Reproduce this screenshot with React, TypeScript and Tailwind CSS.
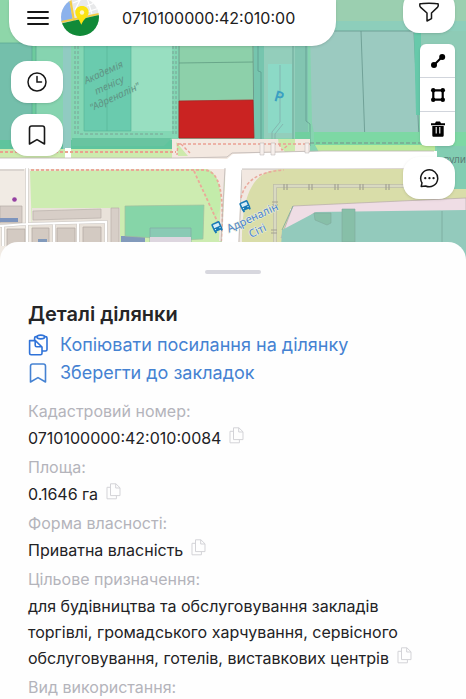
import { useState } from "react";
import type { ReactNode } from "react";

const PARCEL_PURPOSE =
  "для будівництва та обслуговування закладів торгівлі, громадського харчування, сервісного обслуговування, готелів, виставкових центрів";

function BookmarkIcon({ className }: { className: string }) {
  return (
    <svg viewBox="0 0 18 20" className={className} fill="none" stroke="currentColor" strokeWidth="1.6" strokeLinejoin="round" aria-hidden="true">
      <path d="M1.5 19V3.2C1.5 1.7 2.3 1 3.7 1h10.6c1.4 0 2.2.7 2.2 2.2V19L9 14.6z" />
    </svg>
  );
}

function CopyIcon() {
  return (
    <svg viewBox="0 0 15 17" className="h-[17px] w-[15px]" fill="none" stroke="currentColor" strokeWidth="1" strokeLinejoin="round" aria-hidden="true">
      <path d="M4.5.8h5.4l4.1 4v7.8H4.5z" />
      <path d="M9.7.8v4.2H14M4.5 4.3H1v11.5h9.4v-3" />
    </svg>
  );
}

function CopyLinkIcon() {
  return (
    <svg viewBox="0 0 20 22" className="h-[22px] w-5 text-[#2f72d8]" fill="none" stroke="currentColor" strokeWidth="1.6" strokeLinejoin="round" aria-hidden="true">
      <rect x="6.6" y="2.6" width="12.4" height="14.4" rx="1.5" />
      <path d="M1.6 6.6h5.8L14 13v6.2c0 1-.5 1.6-1.5 1.6H3.1c-1 0-1.5-.6-1.5-1.6z" fill="#fefefe" />
      <path d="M7.2 6.8v4.4c0 1.1.5 1.6 1.6 1.6h5" />
      <ellipse cx="12.8" cy="3" rx="3.8" ry="1.9" fill="#fefefe" />
    </svg>
  );
}

function Logo() {
  return (
    <svg viewBox="0 0 38 38" className="size-[38px] shrink-0" aria-hidden="true">
      <defs>
        <clipPath id="logo-clip">
          <circle cx="19" cy="19" r="19" />
        </clipPath>
      </defs>
      <g clipPath="url(#logo-clip)">
        <rect width="38" height="38" fill="#e8e9ea" />
        <path d="M12 5 24 0M26 8l12-5M26 14l12-4M14 12l6-12M31 16 26 0" stroke="#fff" strokeWidth="1.2" />
        <path d="M0 0h8l4 22-12 3z" fill="#8cb2ec" />
        <path d="m9 0 4 23M0 24l38-8" stroke="#f4cd45" strokeWidth="2.2" fill="none" />
        <path d="M0 25.4 38 17v21H0z" fill="#118a38" />
        <path d="M21 8c-4 0-6.7 2.6-6.7 6.2 0 4.6 3.7 6.3 6 12.600 2.300-6.300 7.400-8 7.400-12.600C27.700 10.600 25 8 21 8z" fill="#fce312" />
        <circle cx="21" cy="14.5" r="2.2" fill="#fff6c9" />
      </g>
    </svg>
  );
}

function BusStop({ x, y }: { x: number; y: number }) {
  return (
    <g transform={`translate(${x} ${y}) rotate(-24)`}>
      <rect x="-4.5" y="-5" width="9" height="9" rx="1.5" fill="#1779b5" />
      <rect x="-3" y="-3.4" width="6" height="3.4" fill="#d8edf7" />
      <path d="M-3.2 3v2.2M3.2 3v2.2" stroke="#1779b5" strokeWidth="1.8" />
      <path d="M-3 1.8h1.2M1.8 1.8H3" stroke="#fff" strokeWidth="1" />
    </g>
  );
}

function CadastreMap() {
  return (
    <svg
      viewBox="0 0 466 264"
      preserveAspectRatio="xMidYMin slice"
      className="absolute inset-x-0 top-0 h-[264px] w-full"
      role="img"
      aria-label="Кадастрова карта"
    >
      <rect width="466" height="264" fill="#f1ebe4" />

      {/* parcels north of the street */}
      <path d="M0 0h466v152H0z" fill="#86d4b0" />
      <path d="M0 0h33v43H0z" fill="#8ed6a9" />
      <path d="M0 43h32v98H0z" fill="#74bfab" />
      <path d="M32 43h4v98h-4z" fill="#6dcb9d" />
      <path d="M0 43h32v98M36 46v95" stroke="#5aa693" strokeWidth=".7" fill="none" />
      <path d="M0 140h172v10H0z" fill="#5fc49d" />
      <path d="M72 138h100l-8 8H72z" fill="#68c4a0" />
      <path d="M73 46h106v92H73z" fill="#83d7b4" />
      <path d="M84 46h47v85H84z" fill="#6acbae" />
      <path d="M131 46h41v85h-41z" fill="#98dfc1" />
      <path d="M84 46v85h47V46M107 46v85" stroke="#55b196" strokeWidth=".6" fill="none" />
      <path d="M78 46v88h87M75 46v88M173 46v88M176 46v88" stroke="#7a9c92" strokeWidth=".9" strokeDasharray="3 2" fill="none" />
      <path d="M63 46h8v104h-8z" fill="#91cbc2" />

      <path d="M179 46h74v55h-74z" fill="#8dd0aa" />
      <path d="m179 63 74-1" stroke="#5f9c82" strokeWidth=".8" />
      <path d="M179 46v92M253 46l1 92" stroke="#648f83" strokeWidth=".8" />
      <path d="M254 46h10v97h-10z" fill="#76c5ae" />
      <path d="M264 46h31v92h-31z" fill="#93cebb" />
      <path d="M268 64h24v69h-24z" fill="#8cd9c6" />
      <path d="M295 46h13v97h-13z" fill="#82c5b1" />
      <path d="M258 46v25l3 1v80M306 46v75l4 3v22M293 46v97" stroke="#5d978b" strokeWidth=".7" fill="none" />
      <path d="M280 65v57l-8 10v20M275 152v-18l8-10" stroke="#80a8a6" strokeWidth=".7" fill="none" />

      <path d="M300 0h166v31H300z" fill="#9bcfb0" />
      <path d="M300 21h166v10H300z" fill="#8dcebb" />
      <path d="M310 31h106l3 102H314l-2-10z" fill="#9bcac0" />
      <path d="M308 31h107M361 31l4 112M414 33l5 104" stroke="#66978d" strokeWidth=".8" fill="none" />
      <path d="M414 33h7v82h-5z" fill="#67c9aa" />
      <path d="M421 31h45v106h-45z" fill="#8ecbb6" />
      <path d="M314 132h152v14H314z" fill="#7dd8a4" />
      <path d="M310 143h110" stroke="#7b8f89" strokeWidth="1" strokeDasharray="4 2" />
      <path d="M295 132h15v12h-15z" fill="#70cf9f" />

      {/* verge and pavements */}
      <path d="M0 149h178v12H0z" fill="#cdebad" />
      <path d="M65 148h6v13h-6z" fill="#fff" />
      <path d="M172 139h138v21H172z" fill="#f3e8e0" />
      <path d="m176 142 12 14h-10zM278 139h17v12l-10 1-6-7z" fill="#cdeaac" />
      <path d="M315 145h120v9H320z" fill="#bcea9b" />
      <path d="M0 152h176" stroke="#e9a28f" strokeWidth="1.8" strokeDasharray="3 2" />
      <path d="M178 144h132M178 143l-1 12M181 144l9 9M279 144l3 6 5-4" stroke="#eba093" strokeWidth="1.4" strokeDasharray="3 2" fill="none" />
      <path d="M179 101 253 100 254 138H179z" fill="#ca2322" stroke="#a82525" strokeWidth=".8" />

      {/* main street */}
      <path d="M0 158h178l49 1 6-5 90-3h143v16l-130 2H0z" fill="#fff" />
      <path d="M0 158h178l49-1 5-4 90-2h112M0 170h24M242 169h195" stroke="#bcb5b3" strokeWidth=".8" fill="none" />
      <path d="M260 143h4v12h-4zM271 143h4v12h-4zM305 143h4v10h-4z" fill="#f6efec" stroke="#b5b2b0" strokeWidth=".5" />
      <path d="M437 146h29v48h-29z" fill="#82cdb2" />

      {/* south-west quarter */}
      <path d="m30 171 165-2h22l8 10-4 85H33z" fill="#cdecb1" />
      <path d="m195 169 12 1c9 2 15 15 15 35l-7 14z" fill="#c3ecaa" />
      <path d="M207 169h18l-3 72h-3l2-45c-2-15-5-24-14-27z" fill="#f2e7e1" />
      <path d="M31 170h173c16 1 20 22 18 71M194 171l24 52" stroke="#eaa998" strokeWidth="1.8" strokeDasharray="3 2" fill="none" />
      <path d="M32 208h88v56H32z" fill="#e9e2da" />
      <path d="m33 211 68-2v9l-68 2zM111 208h8v35h-8z" fill="#d7cec7" stroke="#b9b0aa" strokeWidth=".7" />
      <path d="M0 206h22v17H0z" fill="#d6ccc6" stroke="#b5aca8" strokeWidth=".7" />
      <path d="M0 218h18v4H0z" fill="#7d94bd" />
      <path d="M7 229h18v18H7zM32 228h17v18H32zM57 228h18v18H57zM83 227h18v18H83z" fill="#d3cac2" stroke="#b5aba5" strokeWidth=".8" />
      <path d="M38 239h9v4h-9zM121 236h24v6h-24z" fill="#829abb" />
      <path d="M27 168v78M0 226l26-2 80-2v22M3 226v20M54 224v22M78 223v22" stroke="#c9c5c2" strokeWidth="3.2" fill="none" />
      <path d="M27 168v78M0 226l26-2 80-2v22M3 226v20M54 224v22M78 223v22" stroke="#fff" strokeWidth="2.2" fill="none" />
      <path d="m125 206 79-1-1 34-20 1-58-4z" fill="#86d5a8" stroke="#a4bf9d" strokeWidth=".7" />
      <path d="M150 228h41v14h-41z" fill="#8acab4" stroke="#83aaa6" strokeWidth=".7" />
      <path d="M150 237h41v8h-41z" fill="#ddd6df" />
      <circle cx="14.5" cy="199.5" r="2.3" fill="#9540a2" />

      {/* side street */}
      <path d="M226 165h16l-4 79h-16z" fill="#fff" />
      <path d="m225 168-4 74M242 170l-3 72" stroke="#bdb6b3" strokeWidth=".8" />

      {/* south-east quarter */}
      <path d="M242 170h38c-20 2-34 14-37 50z" fill="#f2e8e1" />
      <path d="M242 242c0-47 10-73 42-73h182v40H290v55h-48z" fill="#d9dda9" />
      <path d="M241 198c4-17 16-26 43-28" stroke="#eaa99d" strokeWidth="1.6" strokeDasharray="3 2" fill="none" />
      <path d="m293 206 173-8v14l-152 1-33 25z" fill="#efdde5" stroke="#b6aba9" strokeWidth=".7" />
      <path d="m282 230 34-18 150-2v54H280z" fill="#93cabc" />
      <path d="M314 213h17v10l-4 2-12-5zM342 209h13v33h-13z" fill="#87bfa8" stroke="#7fa99c" strokeWidth=".6" />
      <path d="M442 211v34M282 230l11-24" stroke="#78a89c" strokeWidth=".8" />
      <path d="M275 264v-78h191" stroke="#bdbda6" strokeWidth="4" fill="none" />
      <path d="M275 264v-78h191" stroke="#d9d9c1" strokeWidth="2.5" fill="none" />
      <path d="M284 184v6M287 184v6M309 184v6M312 184v6M335 184v6M338 184v6M360 184v6M363 184v6M386 184v6M389 184v6M272 202h6M272 205h6M271 230h6M271 233h6" stroke="#a3a292" strokeWidth="1.2" />
      <path d="M437 169h29v20h-29z" fill="#82cdb2" />

      <BusStop x={217} y={227} />
      <BusStop x={245} y={206} />
      <g className="font-['Noto_Sans',sans-serif]" textAnchor="middle">
        <g fill="#5f9384" fontSize="10" fontStyle="italic" transform="translate(107 80) rotate(-25)">
          <text x="0" y="-5">Академія</text>
          <text x="0" y="9">тенісу</text>
          <text x="0" y="22">"Адреналін"</text>
        </g>
        <g fill="#4c82cb" stroke="#eaf0dc" strokeWidth="1.2" paintOrder="stroke" fontSize="11" transform="translate(254 221) rotate(-25)">
          <text x="0" y="0">Адреналін</text>
          <text x="-1" y="14">Сіті</text>
        </g>
        <text x="279" y="102" fill="#3a9fc2" fontSize="15" fontWeight="600" transform="rotate(16 279 97)">P</text>
        <text x="466" y="163" fill="#5c7e77" fontSize="10" textAnchor="end">вули</text>
      </g>
    </svg>
  );
}

function MapButton({ label, children }: { label: string; children: ReactNode }) {
  return (
    <button
      type="button"
      aria-label={label}
      className="flex h-[42px] w-[52px] items-center justify-center rounded-2xl bg-white text-[#171717] shadow-sm"
    >
      {children}
    </button>
  );
}

function DrawTools() {
  return (
    <div className="flex w-[35px] flex-col divide-y divide-gray-300 overflow-hidden rounded-md bg-white text-black shadow-sm">
      <button type="button" aria-label="Лінія" className="flex h-[34px] items-center justify-center">
        <svg viewBox="0 0 16 16" className="size-4" fill="currentColor" aria-hidden="true">
          <path d="m4 12 8-8" stroke="currentColor" strokeWidth="2" />
          <circle cx="4" cy="12" r="3" />
          <circle cx="12.2" cy="3.9" r="3" />
        </svg>
      </button>
      <button type="button" aria-label="Полігон" className="flex h-[34px] items-center justify-center">
        <svg viewBox="0 0 16 16" className="size-4" fill="currentColor" aria-hidden="true">
          <path d="M3.3 3.3h9.4v9.4H3.3z" fill="none" stroke="currentColor" strokeWidth="2.2" />
          <circle cx="3.2" cy="3.2" r="2.2" />
          <circle cx="12.8" cy="3.2" r="2.2" />
          <circle cx="3.2" cy="12.8" r="2.2" />
          <circle cx="12.8" cy="12.8" r="2.2" />
        </svg>
      </button>
      <button type="button" aria-label="Видалити" className="flex h-[34px] items-center justify-center">
        <svg viewBox="0 0 16 18" className="h-[18px] w-4" fill="currentColor" aria-hidden="true">
          <path d="M1 3.2h4L6 1.5h4l1 1.7h4v2H1z" />
          <path d="M2.3 6h11.4v9.2c0 1-.6 1.6-1.6 1.6H3.9c-1 0-1.6-.6-1.6-1.6z" />
          <path d="M6.2 7v6.5M9.8 7v6.5" stroke="#fff" strokeWidth="1.1" />
        </svg>
      </button>
    </div>
  );
}

function SearchBar() {
  const [query, setQuery] = useState("0710100000:42:010:00");

  return (
    <form className="flex h-[46px] items-start rounded-b-3xl bg-white pl-[18px] shadow-sm" onSubmit={(e) => e.preventDefault()}>
      <button type="button" aria-label="Меню" className="flex h-9 w-[22px] shrink-0 items-center">
        <svg viewBox="0 0 22 16" className="h-4 w-[22px]" stroke="#171717" strokeWidth="1.9" strokeLinecap="round" aria-hidden="true">
          <path d="M1 2h20M1 8h20M1 14h20" />
        </svg>
      </button>
      <div className="-mt-0.5 ml-3">
        <Logo />
      </div>
      <input
        type="text"
        aria-label="Кадастровий номер"
        value={query}
        onChange={(e) => setQuery(e.target.value)}
        className="ml-[23px] h-9 w-full min-w-0 bg-transparent text-base text-[#202020] outline-none"
      />
    </form>
  );
}

function Field({ label, children }: { label: string; children?: ReactNode }) {
  return (
    <div>
      <dt className="text-base leading-6 text-[#b4b4bb]">{label}</dt>
      {children && (
        <dd className="mt-0.5 pb-1 text-base leading-[26px] text-[#222225]">
          {children}
          <button type="button" aria-label={`Копіювати: ${label}`} className="ml-2 align-baseline text-[#d3d3d7]">
            <CopyIcon />
          </button>
        </dd>
      )}
    </div>
  );
}

export default function App() {
  return (
    <div className="relative h-screen overflow-hidden bg-white font-['Inter',sans-serif]">
      <CadastreMap />

      <div className="relative flex h-[242px] justify-between gap-[67px] pr-[11px] pl-[9px]">
        <div className="flex min-w-0 flex-1 flex-col">
          <SearchBar />
          <div className="mt-[15px] ml-0.5 flex flex-col gap-[11px]">
            <MapButton label="Історія">
              <svg viewBox="0 0 20 20" className="size-5" fill="none" stroke="currentColor" strokeWidth="1.5" strokeLinecap="round" aria-hidden="true">
                <circle cx="10" cy="10" r="9" />
                <path d="M10 4.5V10h4.5" />
              </svg>
            </MapButton>
            <MapButton label="Закладки">
              <BookmarkIcon className="h-5 w-[18px]" />
            </MapButton>
          </div>
        </div>

        <div className="-mt-[9px] flex flex-col items-end gap-[11px]">
          <MapButton label="Фільтр">
            <svg viewBox="0 0 20 20" className="size-5" fill="none" stroke="currentColor" strokeWidth="1.5" strokeLinejoin="round" aria-hidden="true">
              <path d="M1 1.8C4 .9 16 .9 19 1.8c.5 1.6.2 2.8-.6 3.6L12.5 11v5.6L8 19v-8L1.7 5.4C.8 4.6.6 3.3 1 1.8z" />
            </svg>
          </MapButton>
          <DrawTools />
          <MapButton label="Чат">
            <svg viewBox="0 0 20 20" className="size-5" fill="none" stroke="currentColor" strokeWidth="1.5" strokeLinecap="round" strokeLinejoin="round" aria-hidden="true">
              <path d="M2.2 18.5 3 14.8A8.5 8.5 0 1 1 6.6 18z" />
              <path d="M6.2 10.2h.1M10.4 10.2h.1M14.5 10.2h.1" strokeWidth="2.2" />
            </svg>
          </MapButton>
        </div>
      </div>

      <main className="relative rounded-t-[18px] bg-[#fefefe] px-7 pt-7">
        <div className="mx-auto h-1 w-14 rounded-full bg-[#d7d7de]" />
        <h1 className="mt-6 mb-px text-xl leading-8 font-semibold text-[#252527]">Деталі ділянки</h1>
        <div className="flex flex-col items-start text-lg leading-7 text-[#4582d2]">
          <button type="button" className="flex items-center gap-3">
            <CopyLinkIcon />
            Копіювати посилання на ділянку
          </button>
          <button type="button" className="flex items-center gap-3">
            <span className="flex w-5 justify-center">
              <BookmarkIcon className="h-5 w-[18px]" />
            </span>
            Зберегти до закладок
          </button>
        </div>

        <dl className="mt-3">
          <Field label="Кадастровий номер:">0710100000:42:010:0084</Field>
          <Field label="Площа:">0.1646 га</Field>
          <Field label="Форма власності:">Приватна власність</Field>
          <Field label="Цільове призначення:">{PARCEL_PURPOSE}</Field>
          <Field label="Вид використання:" />
        </dl>
      </main>
    </div>
  );
}
